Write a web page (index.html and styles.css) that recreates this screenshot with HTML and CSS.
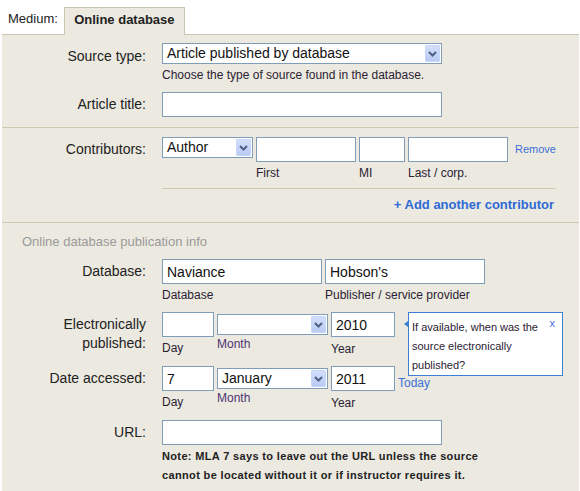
FILE: index.html
```html
<!DOCTYPE html>
<html>
<head>
<meta charset="utf-8">
<link rel="stylesheet" href="styles.css">
</head>
<body>
<div class="tabbar">
  <span class="medium">Medium:</span>
  <div class="tab">Online database</div>
</div>
<div class="panel">
  <section class="sec sec1">
    <div class="row first">
      <div class="lbl lbl-sel">Source type:</div>
      <div class="col">
        <div class="select w280"><span class="sv">Article published by database</span><span class="btn"><svg width="9" height="6" viewBox="0 0 9 6"><path d="M1 1 L4.5 4.5 L8 1" stroke="#4d6185" stroke-width="2" fill="none"/></svg></span></div>
        <div class="hint">Choose the type of source found in the database.</div>
      </div>
    </div>
    <div class="row">
      <div class="lbl">Article title:</div>
      <div class="col"><input class="input w280" type="text" value=""></div>
    </div>
  </section>

  <section class="sec sec2">
    <div class="row first">
      <div class="lbl">Contributors:</div>
      <div class="fields">
        <div class="select w91"><span class="sv">Author</span><span class="btn"><svg width="9" height="6" viewBox="0 0 9 6"><path d="M1 1 L4.5 4.5 L8 1" stroke="#4d6185" stroke-width="2" fill="none"/></svg></span></div>
        <div class="fld"><input class="input w100" type="text" value=""><div class="sub">First</div></div>
        <div class="fld"><input class="input w46" type="text" value=""><div class="sub">MI</div></div>
        <div class="fld"><input class="input w100" type="text" value=""><div class="sub">Last / corp.</div></div>
        <a class="remove">Remove</a>
      </div>
    </div>
    <div class="rule"></div>
    <div class="addrow"><a class="add">+ Add another contributor</a></div>
  </section>

  <section class="sec sec3">
    <div class="heading">Online database publication info</div>
    <div class="row">
      <div class="lbl">Database:</div>
      <div class="fields">
        <div class="fld"><input class="input w160" type="text" value="Naviance"><div class="sub">Database</div></div>
        <div class="fld"><input class="input w160" type="text" value="Hobson's"><div class="sub">Publisher / service provider</div></div>
      </div>
    </div>
    <div class="row rel">
      <div class="lbl">Electronically<br>published:</div>
      <div class="fields">
        <div class="fld"><input class="input w52" type="text" value=""><div class="sub">Day</div></div>
        <div class="fld"><div class="select w111 mt2"><span class="sv"></span><span class="btn"><svg width="9" height="6" viewBox="0 0 9 6"><path d="M1 1 L4.5 4.5 L8 1" stroke="#4d6185" stroke-width="2" fill="none"/></svg></span></div><div class="sub month">Month</div></div>
        <div class="fld"><input class="input w64" type="text" value="2010"><div class="sub yr">Year</div></div>
      </div>
      <div class="tip">
        <span class="nub"></span>
        <span class="tipx">x</span>
        <div class="tiptext">If available, when was the<br>source electronically<br>published?</div>
      </div>
    </div>
    <div class="row">
      <div class="lbl">Date accessed:</div>
      <div class="fields">
        <div class="fld"><input class="input w52" type="text" value="7"><div class="sub">Day</div></div>
        <div class="fld"><div class="select w111 mt2"><span class="sv">January</span><span class="btn"><svg width="9" height="6" viewBox="0 0 9 6"><path d="M1 1 L4.5 4.5 L8 1" stroke="#4d6185" stroke-width="2" fill="none"/></svg></span></div><div class="sub month">Month</div></div>
        <div class="fld"><input class="input w64" type="text" value="2011"><div class="sub yr">Year</div></div>
        <a class="today">Today</a>
      </div>
    </div>
    <div class="row">
      <div class="lbl">URL:</div>
      <div class="col">
        <input class="input w280" type="text" value="">
        <div class="note">Note: MLA 7 says to leave out the URL unless the source<br>cannot be located without it or if instructor requires it.</div>
      </div>
    </div>
  </section>
</div>
</body>
</html>
```

FILE: styles.css
```css
html, body {
  margin: 0;
  padding: 0;
  background: #ffffff;
}
body {
  width: 580px;
  font-family: "Liberation Sans", Arial, sans-serif;
  color: #222;
}
.tabbar {
  height: 34px;
  display: flex;
  align-items: flex-end;
  padding-left: 8px;
  position: relative;
  z-index: 2;
}
.medium {
  font-size: 13px;
  line-height: 16px;
  margin-bottom: 7px;
  color: #222;
}
.tab {
  margin-left: 6px;
  width: 121px;
  box-sizing: border-box;
  border: 1px solid #c9c5ae;
  border-bottom: none;
  background: #ece9e0;
  font-size: 13px;
  font-weight: bold;
  line-height: 24px;
  text-align: center;
  margin-bottom: -1px;
  height: 28px;
  color: #222;
}
.panel {
  margin: 0 1px 0 2px;
  background: #ece9e0;
  border-top: 1px solid #c9c5ae;
  border-bottom: 2px solid #cdc7aa;
}
.sec {
  border-bottom: 1px solid #cdc9b2;
}
.sec3 {
  border-bottom: none;
  padding-bottom: 6px;
}
.sec1 {
  padding-top: 8px;
  padding-bottom: 10px;
}
.sec2 {
  padding-top: 9px;
  padding-bottom: 8px;
}
.row {
  display: flex;
  margin-top: 9px;
}
.row.first {
  margin-top: 0;
}
.rel {
  position: relative;
}
.lbl {
  width: 144px;
  flex: none;
  margin-right: 16px;
  text-align: right;
  font-size: 14px;
  line-height: 19px;
  padding-top: 3px;
  color: #222;
}
.lbl-sel {
  padding-top: 4px;
}
.col {
  display: flex;
  flex-direction: column;
}
.fields {
  display: flex;
  align-items: flex-start;
}
.fld {
  display: flex;
  flex-direction: column;
  margin-right: 3px;
}
.input {
  box-sizing: border-box;
  height: 25px;
  margin: 0;
  border: 1px solid #7f9db9;
  background: #fff;
  font-family: "Liberation Sans", Arial, sans-serif;
  font-size: 14px;
  color: #111;
  padding: 0 0 0 4px;
  outline: none;
}
.select {
  box-sizing: border-box;
  height: 21px;
  border: 1px solid #7f9db9;
  background: #fff;
  display: flex;
  align-items: stretch;
  padding: 1px;
  font-size: 14px;
  color: #111;
}
.select.w91 { margin-right: 3px; }
.mt2 { margin-top: 2px; }
.sv {
  flex: 1;
  line-height: 17px;
  padding-left: 3px;
  white-space: nowrap;
  overflow: hidden;
}
.btn {
  width: 15px;
  flex: none;
  box-sizing: border-box;
  border: 1px solid #c8d6f7;
  border-radius: 1px;
  background: linear-gradient(#d3defb, #b9cbf4);
  display: flex;
  align-items: center;
  justify-content: center;
}
.w280 { width: 280px; }
.w91 { width: 91px; }
.w100 { width: 100px; }
.w46 { width: 46px; }
.w160 { width: 160px; }
.w52 { width: 52px; }
.w111 { width: 111px; }
.w64 { width: 64px; }
.hint {
  font-size: 12px;
  line-height: 16px;
  margin-top: 3px;
  color: #2b2233;
}
.sub {
  font-size: 12px;
  line-height: 16px;
  margin-top: 3px;
  color: #2b2233;
}
.sub.month {
  margin-top: 1px;
  color: #4e3470;
}
.sub.yr {
  margin-top: 4px;
}
.remove {
  font-size: 11px;
  line-height: 16px;
  padding-top: 4px;
  margin-left: 4px;
  color: #3b6fd6;
}
.today {
  font-size: 12px;
  line-height: 16px;
  padding-top: 9px;
  color: #3b6fd6;
}
.rule {
  margin: 7px 0 0 160px;
  width: 394px;
  height: 1px;
  background: #cdc9b2;
}
.addrow {
  margin: 6px 0 0 160px;
  width: 392px;
  text-align: right;
  line-height: 18px;
}
.add {
  font-size: 13px;
  font-weight: bold;
  color: #2f6ad6;
}
.heading {
  padding: 11px 0 0 20px;
  font-size: 13px;
  line-height: 16px;
  color: #9a9a9a;
}
.note {
  margin-top: 2px;
  font-size: 11px;
  font-weight: bold;
  line-height: 19px;
  letter-spacing: 0.35px;
  color: #222;
  white-space: nowrap;
}
.tip {
  position: absolute;
  left: 406px;
  top: 0;
  width: 155px;
  height: 64px;
  box-sizing: border-box;
  border: 1px solid #3d7fd3;
  background: #fff;
  padding: 5px 0 0 3px;
}
.tiptext {
  font-size: 11px;
  line-height: 19px;
  color: #2b2233;
}
.tipx {
  position: absolute;
  right: 7px;
  top: 3px;
  font-size: 11px;
  line-height: 14px;
  color: #4a6ee0;
}
.nub {
  position: absolute;
  left: -5px;
  top: 8px;
  width: 0;
  height: 0;
  border-top: 3px solid transparent;
  border-bottom: 3px solid transparent;
  border-right: 4px solid #3d7fd3;
}
```
